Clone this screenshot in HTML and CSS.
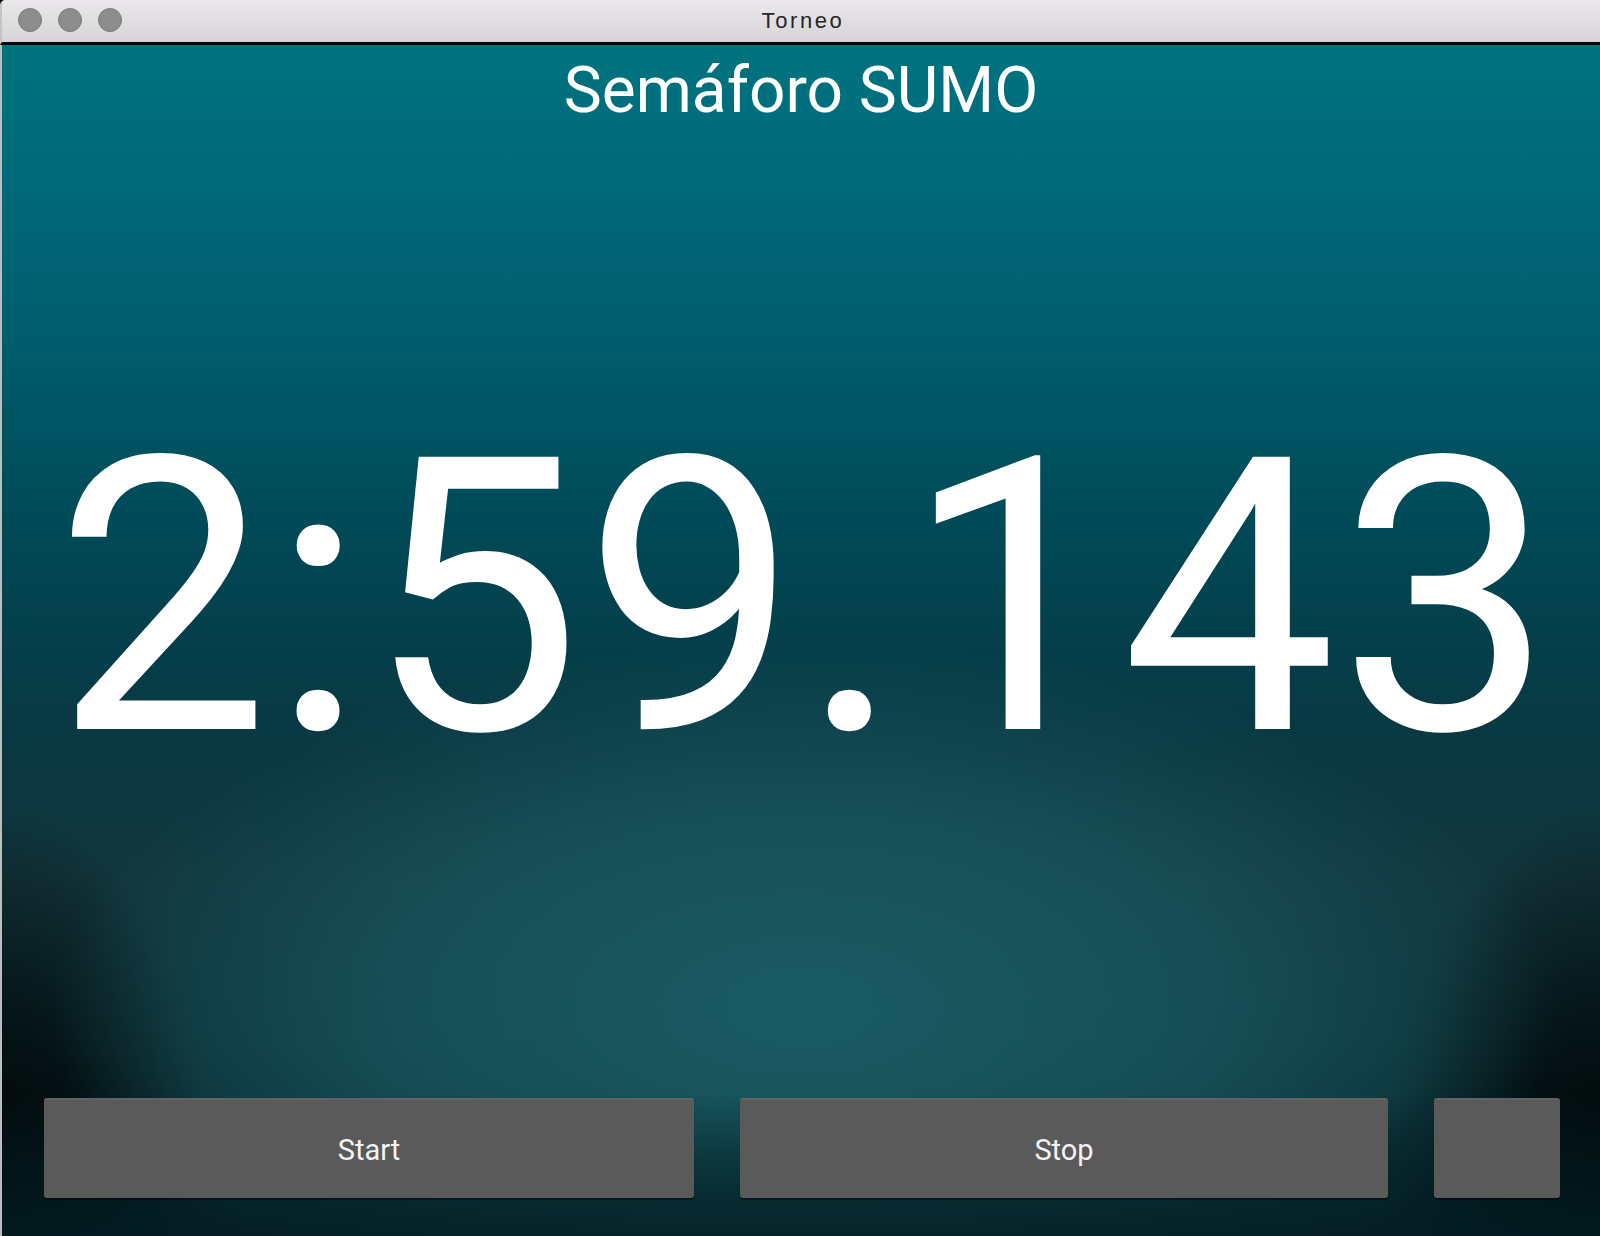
FILE: index.html
```html
<!DOCTYPE html>
<html lang="es">
<head>
<meta charset="utf-8">
<title>Torneo</title>
<link rel="stylesheet" href="styles.css">
</head>
<body>
<div class="window">
  <header class="titlebar">
    <div class="lights">
      <span class="light"></span>
      <span class="light"></span>
      <span class="light"></span>
    </div>
    <div class="wtitle">Torneo</div>
  </header>
  <main class="content">
    <h1 class="heading">Semáforo SUMO</h1>
    <div class="timer">2:59.143</div>
    <div class="spacer"></div>
    <div class="buttons">
      <button class="btn">Start</button>
      <button class="btn">Stop</button>
      <button class="btn"></button>
    </div>
  </main>
</div>
</body>
</html>
```
FILE: styles.css
```css
html, body {
  margin: 0;
  padding: 0;
  width: 1600px;
  height: 1236px;
  overflow: hidden;
  background: #000;
}

.window {
  width: 1600px;
  height: 1236px;
  display: flex;
  flex-direction: column;
  font-family: Roboto, "Noto Sans", sans-serif;
}

.titlebar {
  position: relative;
  height: 42px;
  flex: 0 0 42px;
  background: linear-gradient(to bottom, #ebe9eb 0%, #d6d4d6 100%);
  border-bottom: 3px solid #050505;
  border-left: 2px solid #c4c4c4;
  border-top-left-radius: 5px;
  display: flex;
  align-items: center;
  justify-content: center;
}

.lights {
  position: absolute;
  left: 16px;
  top: 8px;
  display: flex;
  gap: 16px;
}

.light {
  width: 22px;
  height: 22px;
  border-radius: 50%;
  background: #8e8d8e;
  border: 1px solid #7a797a;
}

.wtitle {
  font-family: "Liberation Sans", Arial, sans-serif;
  font-size: 22px;
  letter-spacing: 2.6px;
  color: #262626;
  margin-left: 4px;
  margin-top: -1px;
}

.content {
  flex: 1;
  display: flex;
  flex-direction: column;
  align-items: center;
  border-left: 2px solid #bdbdbd;
  background:
    linear-gradient(to bottom, rgba(3, 32, 38, 0) 88%, rgba(3, 32, 38, 0.55) 94%, rgba(3, 30, 36, 0.85) 100%),
    radial-gradient(ellipse 47% 31% at 50% 81%, rgba(26, 94, 103, 0.95) 0%, rgba(26, 88, 96, 0.72) 55%, rgba(20, 70, 80, 0) 100%),
    radial-gradient(ellipse 14% 36% at 0% 100%, rgba(0, 0, 0, 0.95) 0%, rgba(0, 0, 0, 0.65) 45%, rgba(0, 0, 0, 0) 100%),
    radial-gradient(ellipse 14% 36% at 100% 100%, rgba(0, 0, 0, 0.95) 0%, rgba(0, 0, 0, 0.65) 45%, rgba(0, 0, 0, 0) 100%),
    linear-gradient(to bottom, #00737f 0%, #00687a 12%, #005e6d 24%, #004c5a 38%, #043f4b 50%, #0a3740 60%, #12363d 70%, #0c3238 84%, #03242a 100%);
  overflow: hidden;
}

.heading {
  margin: 14px 0 0 0;
  font-weight: 400;
  font-size: 64px;
  line-height: 1;
  color: #ffffff;
}

.timer {
  margin-top: 284px;
  padding-left: 8px;
  font-size: 383px;
  line-height: 1;
  color: #ffffff;
  letter-spacing: 2px;
}

.spacer {
  flex: 1;
}

.buttons {
  align-self: stretch;
  display: grid;
  grid-template-columns: 650px 648px 126px;
  column-gap: 46px;
  padding: 0 38px 38px 42px;
}

.btn {
  height: 100px;
  margin: 0;
  border: none;
  border-top: 2px solid #636363;
  border-radius: 3px;
  background: #5a5a5a;
  box-shadow: 0 2px 1px rgba(0, 0, 0, 0.45);
  color: #f4f4f4;
  font-family: Roboto, "Noto Sans", sans-serif;
  font-size: 29px;
  padding: 2px 0 0 0;
}
```
